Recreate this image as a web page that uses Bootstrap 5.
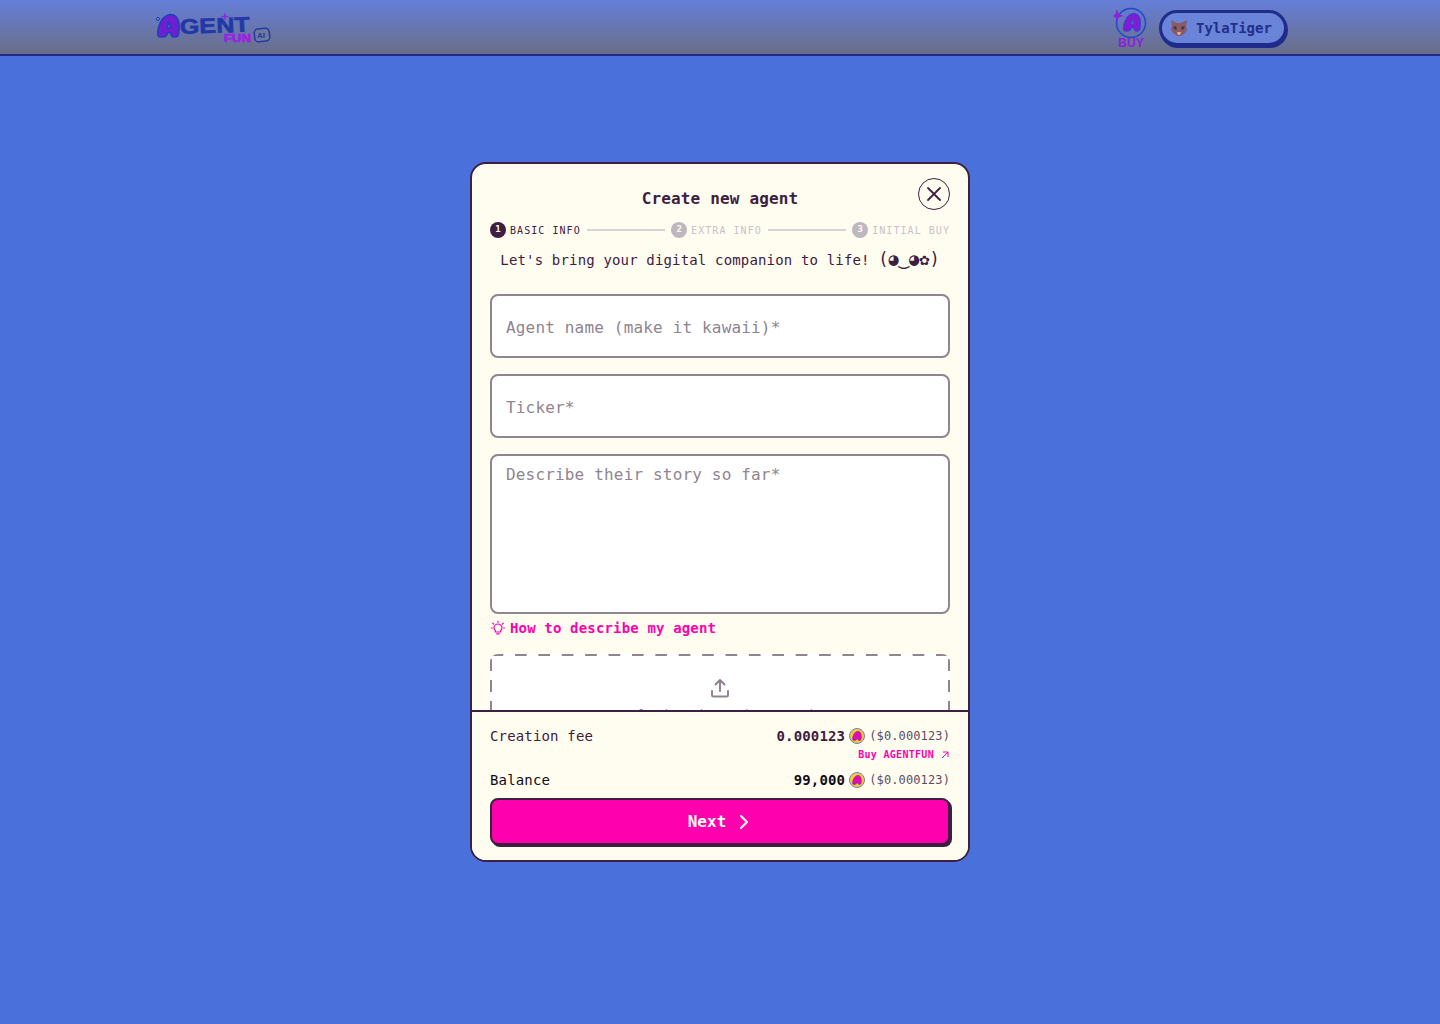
<!DOCTYPE html>
<html lang="en">
<head>
    <meta charset="UTF-8">
    <meta name="viewport" content="width=device-width, initial-scale=1.0">
    <title>Create new agent</title>
    <link href="https://cdn.jsdelivr.net/npm/bootstrap@5.3.0/dist/css/bootstrap.min.css" rel="stylesheet">
    <script src="https://cdn.jsdelivr.net/npm/bootstrap@5.3.0/dist/js/bootstrap.bundle.min.js"></script>
    <style>
        body {
            background: #4a70dc;
            color: #3d2040;
            font-family: "DejaVu Sans Mono", "Liberation Mono", monospace;
            letter-spacing: .01em;
        }
        .topbar {
            height: 56px;
            padding: 0 153px 0 155px;
            background: linear-gradient(#657fd9, #6a6e87);
            border-bottom: 2px solid #1f2c8c;
        }
        .wallet-btn {
            width: 128px;
            height: 36px;
            margin-top: 10px;
            background: #6a84d9;
            border: 3px solid #1f2c8c;
            border-radius: 18px;
            box-shadow: 1px 2px 0 #1f2c8c;
            color: #232e88;
            font-size: 14px;
            font-weight: 700;
            line-height: 1;
        }
        .buy-link {
            width: 38px;
            height: 44px;
            margin-top: 6px;
        }
        .agent-modal {
            width: 500px;
            height: 700px;
            background: #fffdf0;
            border: 2px solid #3d2040;
            border-radius: 16px;
            overflow: hidden;
        }
        .modal-scroll {
            padding: 23px 18px 0;
            overflow: hidden;
        }
        .modal-name {
            margin: 0;
            font-size: 16px;
            font-weight: 700;
            line-height: 24px;
            text-align: center;
        }
        .close-btn {
            top: 14px;
            right: 18px;
            width: 32px;
            height: 32px;
            padding: 0;
            background: transparent;
            border: 1px solid #3d2040;
            border-radius: 50%;
        }
        .steps {
            height: 16px;
            margin-top: 11px;
            font-size: 10px;
            letter-spacing: .105em;
        }
        .step-num {
            width: 16px;
            height: 16px;
            border-radius: 50%;
            background: #3d2040;
            color: #fffdf0;
            font-size: 9px;
            font-weight: 700;
            letter-spacing: 0;
        }
        .step-off { color: #c8c1c9; }
        .step-off .step-num { background: #bfb7c0; }
        .step-line {
            height: 2px;
            margin: 0 6px;
            background: #d8d3d6;
        }
        .tagline {
            margin: 12px 0 24px;
            font-size: 14px;
            line-height: 20px;
            text-align: center;
            white-space: nowrap;
        }
        .kaomoji {
            font-size: 17px;
            line-height: 1;
            letter-spacing: 0;
        }
        .field {
            display: block;
            width: 100%;
            height: 64px;
            margin-bottom: 16px;
            padding: 2px 14px 0;
            background: #fff;
            border: 2px solid #8f8490;
            border-radius: 8px;
            color: #3d2040;
            font-size: 16px;
            letter-spacing: .17px;
        }
        textarea.field {
            height: 160px;
            margin-bottom: 4px;
            padding: 7px 14px;
            resize: none;
        }
        .field::placeholder { color: #8f8490; opacity: 1; }
        .hint {
            height: 20px;
            color: #ff00ae;
            font-size: 14px;
            font-weight: 700;
            line-height: 20px;
            text-decoration: none;
        }
        .dropzone {
            height: 120px;
            margin-top: 16px;
            padding-top: 24px;
            border-radius: 8px;
            color: #8f8490;
            font-size: 12px;
            background-color: #fff;
            background-image:
                linear-gradient(90deg, #8f8490 12px, transparent 12px),
                linear-gradient(90deg, #8f8490 12px, transparent 12px),
                linear-gradient(#8f8490 12px, transparent 12px),
                linear-gradient(#8f8490 12px, transparent 12px);
            background-size: 23.4px 2px, 23.4px 2px, 2px 21px, 2px 21px;
            background-position: 1.600px 0, 1.600px 100%, 0 5px, 100% 5px;
            background-repeat: repeat-x, repeat-x, repeat-y, repeat-y;
        }
        .modal-foot {
            flex: 0 0 150px;
            padding: 14px 18px 0;
            background: #fffdf0;
            border-top: 2px solid #3d2040;
            font-size: 14px;
            line-height: 20px;
        }
        .usd {
            color: #5e4a62;
            font-size: 12px;
            line-height: 19px;
            letter-spacing: .01em;
            padding-top: 1px;
        }
        .buy-token {
            height: 14px;
            margin-top: 2px;
            color: #ff00ae;
            font-size: 10px;
            font-weight: 700;
            line-height: 14px;
            letter-spacing: .03em;
            text-decoration: none;
            gap: 6px;
        }
        .balance-row {
            margin: 8px 0;
            color: #120c14;
        }
        .next-btn {
            width: 460px;
            height: 47px;
            padding: 0;
            background: #ff00ae;
            border: 2px solid #3d2040;
            border-radius: 8px;
            box-shadow: 2px 2px 0 #3d2040;
            color: #fffdf0;
            font-size: 16px;
            font-weight: 700;
            gap: 10px;
        }
        .next-btn:hover { background: #ff00ae; color: #fffdf0; border-color: #3d2040; }
        .logo-type { font-family: "Liberation Sans", Arial, sans-serif; font-weight: 700; letter-spacing: 0; }
    </style>
</head>
<body>
    <svg width="0" height="0" class="position-absolute">
        <symbol id="blob" viewBox="0 0 26 26">
            <path fill-rule="evenodd" d="M2 23C1 14 6 2 15 1c6 0 9 5 9 11 0 5 0 9-1 11-2 2-5 2-7 0l-1-3-3 0-1 3c-3 2-8 2-9 0zM13.500 9l-2 6h4z"/>
        </symbol>
    </svg>

    <nav class="topbar fixed-top d-flex justify-content-between">
        <a href="#" class="d-block mt-2">
            <svg width="116" height="38" viewBox="0 0 116 38">
                <use href="#blob" x="1" y="5" width="25" height="26" fill="#6f1fd0" stroke="#1c3fc0" stroke-width="1.500"/>
                <path d="M3 9l2 2-2 2-2-2z" fill="none" stroke="#1c3fc0"/>
                <text class="logo-type" x="25" y="26" font-size="21" fill="#2238a8" stroke="#2238a8" stroke-width=".6" textLength="70" lengthAdjust="spacingAndGlyphs" transform="rotate(-2 25 26)">GENT</text>
                <path d="M70 4l1 3.500 3.500 1-3.500 1L70 13l-1-3.500-3.500-1 3.500-1z" fill="#8a2be2"/>
                <text class="logo-type" x="69" y="34" font-size="11" fill="#9a22e0" stroke="#9a22e0" stroke-width=".7" textLength="27" lengthAdjust="spacingAndGlyphs">FUN</text>
                <rect x="99.500" y="20.500" width="15" height="13" rx="4" fill="#6f7a9c" stroke="#2238a8" stroke-width="1.500" transform="rotate(-6 107 27)"/>
                <text class="logo-type" x="102" y="30" font-size="8" fill="#2238a8">AI</text>
            </svg>
        </a>
        <div class="d-flex align-items-start gap-2">
            <a href="#" class="buy-link position-relative d-block">
                <svg width="38" height="44" viewBox="0 0 38 44">
                    <circle cx="18" cy="17" r="14.500" fill="none" stroke="#1f48d0" stroke-width="1.500"/>
                    <use href="#blob" x="9" y="6" width="20" height="21" fill="#7a1fd6" stroke="#1f48d0"/>
                    <path d="M4 3l1.500 5 5 2-5 1.500L4 17l-1.500-5.500L0 10l2.500-2z" fill="#8a22d8"/>
                    <text class="logo-type" x="5" y="41" font-size="13" fill="#8a22d8" textLength="26" lengthAdjust="spacingAndGlyphs">BUY</text>
                </svg>
            </a>
            <button type="button" class="wallet-btn d-flex align-items-center gap-2 px-2">
                <svg width="18" height="16" viewBox="0 0 18 16">
                    <path d="M1 0l6 3h4l6-3-1 6 1 4-2 3-4 3H7l-4-3-2-3 1-4z" fill="#8c5a62"/>
                    <path d="M3 7l3-1 1 3-2 1zM15 7l-3-1-1 3 2 1z" fill="#3b3a55"/>
                    <path d="M7 12h4l-1 3H8z" fill="#c7b2a8"/>
                </svg>
                <span>TylaTiger</span>
            </button>
        </div>
    </nav>

    <main class="d-flex align-items-center justify-content-center vh-100">
        <div class="agent-modal position-relative d-flex flex-column">
            <div class="modal-scroll flex-grow-1">
                <h1 class="modal-name">Create new agent</h1>
                <button type="button" class="close-btn position-absolute d-flex align-items-center justify-content-center" aria-label="Close">
                    <svg width="16" height="16" viewBox="0 0 16 16" fill="none" stroke="#3d2040" stroke-width="1.800" stroke-linecap="round"><path d="M2 2l12 12M14 2L2 14"/></svg>
                </button>

                <div class="steps d-flex align-items-center">
                    <span class="d-flex align-items-center gap-1">
                        <span class="step-num d-flex align-items-center justify-content-center">1</span>BASIC INFO
                    </span>
                    <span class="step-line flex-grow-1"></span>
                    <span class="step-off d-flex align-items-center gap-1">
                        <span class="step-num d-flex align-items-center justify-content-center">2</span>EXTRA INFO
                    </span>
                    <span class="step-line flex-grow-1"></span>
                    <span class="step-off d-flex align-items-center gap-1">
                        <span class="step-num d-flex align-items-center justify-content-center">3</span>INITIAL BUY
                    </span>
                </div>

                <p class="tagline">Let's bring your digital companion to life! <span class="kaomoji">(◕‿◕✿)</span></p>

                <input class="field" type="text" placeholder="Agent name (make it kawaii)*">
                <input class="field" type="text" placeholder="Ticker*">
                <textarea class="field" placeholder="Describe their story so far*"></textarea>

                <a href="#" class="hint d-flex align-items-center gap-1">
                    <svg width="16" height="16" viewBox="-1 -1 18 18" fill="none" stroke="#ff00ae" stroke-width="1.400" stroke-linecap="round">
                        <path d="M5 11c-1-1-1.500-2-1.500-3a4 4 0 0 1 9 0c0 1-.5 2-1.500 3v1.500H5zM6.500 14.500h3M8 0.500v1M2 2.500l1 1M14 2.500l-1 1M0.500 8h1M14.500 8h1"/>
                    </svg>
                    How to describe my agent
                </a>

                <div class="dropzone d-flex flex-column align-items-center">
                    <svg width="20" height="20" viewBox="0 0 20 20" fill="none" stroke="#8f8490" stroke-width="2" stroke-linecap="round" stroke-linejoin="round">
                        <path d="M10 13V2M5.500 6.500L10 2l4.500 4.500M2 13v4a1.500 1.500 0 0 0 1.500 1.500h13A1.500 1.500 0 0 0 18 17v-4"/>
                    </svg>
                    <span class="mt-2">Upload an image (max 5 MB)</span>
                </div>
            </div>

            <div class="modal-foot">
                <div class="d-flex justify-content-between">
                    <span>Creation fee</span>
                    <span class="d-flex align-items-center gap-1">
                        <strong>0.000123</strong>
                        <svg width="16" height="16" viewBox="0 0 16 16"><circle cx="8" cy="8" r="7.500" fill="#fbc832" stroke="#6b7fd0"/><use href="#blob" x="3" y="3" width="10" height="10" fill="#ff00ae" stroke="#2a2fc0" stroke-width="1.500"/></svg>
                        <span class="usd">($0.000123)</span>
                    </span>
                </div>
                <div class="d-flex justify-content-end">
                    <a href="#" class="buy-token d-flex align-items-center">
                        Buy AGENTFUN
                        <svg width="10" height="10" viewBox="0 0 10 10" fill="none" stroke="#ff00ae" stroke-width="1"><path d="M2 8l6-6M3 2h5v5"/></svg>
                    </a>
                </div>
                <div class="balance-row d-flex justify-content-between">
                    <span>Balance</span>
                    <span class="d-flex align-items-center gap-1">
                        <strong>99,000</strong>
                        <svg width="16" height="16" viewBox="0 0 16 16"><circle cx="8" cy="8" r="7.500" fill="#fbc832" stroke="#6b7fd0"/><use href="#blob" x="3" y="3" width="10" height="10" fill="#ff00ae" stroke="#2a2fc0" stroke-width="1.500"/></svg>
                        <span class="usd">($0.000123)</span>
                    </span>
                </div>
                <button type="button" class="btn next-btn d-flex align-items-center justify-content-center">
                    Next
                    <svg width="16" height="16" viewBox="0 0 16 16" fill="none" stroke="#fffdf0" stroke-width="2.200" stroke-linecap="round" stroke-linejoin="round"><path d="M5 2l6 6-6 6"/></svg>
                </button>
            </div>
        </div>
    </main>
</body>
</html>
